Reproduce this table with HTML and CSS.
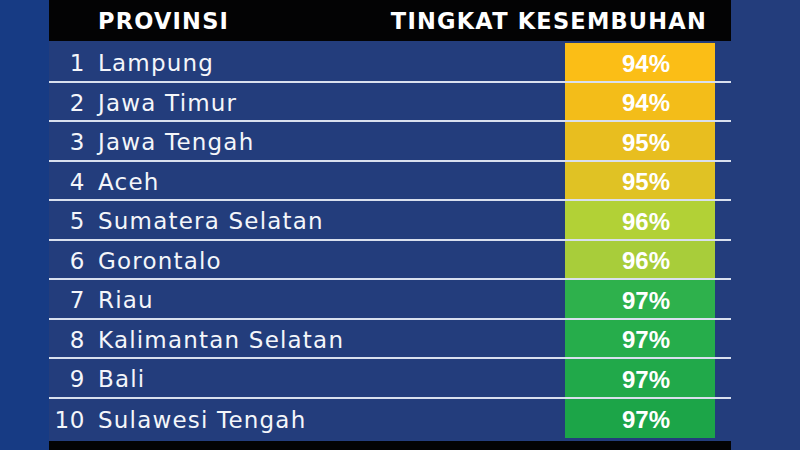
FILE: index.html
```html
<!DOCTYPE html>
<html lang="id">
<head>
<meta charset="utf-8">
<title>Tingkat Kesembuhan</title>
<link rel="stylesheet" href="styles.css">
</head>
<body>
<div class="page">
  <div class="side"></div>
  <div class="board">
    <div class="head">
      <span class="h-prov">PROVINSI</span>
      <span class="h-rate">TINGKAT KESEMBUHAN</span>
    </div>
    <div class="rows">
      <div class="row"><span class="num">1</span><span class="name">Lampung</span><span class="rate" style="background:#fbbe16">94%</span></div>
      <div class="row"><span class="num">2</span><span class="name">Jawa Timur</span><span class="rate" style="background:#f3bd19">94%</span></div>
      <div class="row"><span class="num">3</span><span class="name">Jawa Tengah</span><span class="rate" style="background:#e8be1f">95%</span></div>
      <div class="row"><span class="num">4</span><span class="name">Aceh</span><span class="rate" style="background:#e0c224">95%</span></div>
      <div class="row"><span class="num">5</span><span class="name">Sumatera Selatan</span><span class="rate" style="background:#b2d136">96%</span></div>
      <div class="row"><span class="num">6</span><span class="name">Gorontalo</span><span class="rate" style="background:#a8cd3a">96%</span></div>
      <div class="row"><span class="num">7</span><span class="name">Riau</span><span class="rate" style="background:#2eb14c">97%</span></div>
      <div class="row"><span class="num">8</span><span class="name">Kalimantan Selatan</span><span class="rate" style="background:#26ad4b">97%</span></div>
      <div class="row"><span class="num">9</span><span class="name">Bali</span><span class="rate" style="background:#21a94a">97%</span></div>
      <div class="row"><span class="num">10</span><span class="name">Sulawesi Tengah</span><span class="rate" style="background:#1ca548">97%</span></div>
    </div>
    <div class="foot"></div>
  </div>
</div>
</body>
</html>
```
FILE: styles.css
```css
html, body {
  margin: 0;
  padding: 0;
}
body {
  background: #233d7c;
  width: 800px;
  height: 450px;
  overflow: hidden;
  font-family: "DejaVu Sans", "Liberation Sans", sans-serif;
  color: #f4f6fa;
}
.page {
  display: flex;
  height: 450px;
}
.side {
  width: 49px;
  flex: none;
  background: #173b84;
}
.board {
  width: 682px;
  flex: none;
  display: flex;
  flex-direction: column;
}
.head {
  height: 41px;
  background: #030304;
  display: flex;
  align-items: center;
  justify-content: space-between;
  padding: 0 24px 0 49px;
  font-weight: bold;
  font-size: 22.5px;
  letter-spacing: 1.2px;
  color: #ffffff;
}
.rows {
  padding-top: 2px;
  display: flex;
  flex-direction: column;
}
.row {
  height: 37.5px;
  border-bottom: 2px solid #d9e0ee;
  display: flex;
  align-items: center;
}
.row:last-child {
  border-bottom: none;
  height: 39.5px;
}
.num {
  width: 36px;
  text-align: right;
  font-size: 23px;
  letter-spacing: 0.6px;
  padding-top: 3px;
}
.name {
  flex: 1;
  margin-left: 13px;
  font-size: 23px;
  letter-spacing: 1.2px;
  padding-top: 3px;
}
.rate {
  width: 150px;
  height: 100%;
  box-sizing: border-box;
  margin-right: 16px;
  padding: 4px 0 0 12px;
  display: flex;
  align-items: center;
  justify-content: center;
  font-family: "Liberation Sans", Arial, sans-serif;
  font-weight: bold;
  font-size: 24px;
  color: #ffffff;
}
.foot {
  margin-top: 3px;
  flex: 1;
  background: #030304;
}
```
